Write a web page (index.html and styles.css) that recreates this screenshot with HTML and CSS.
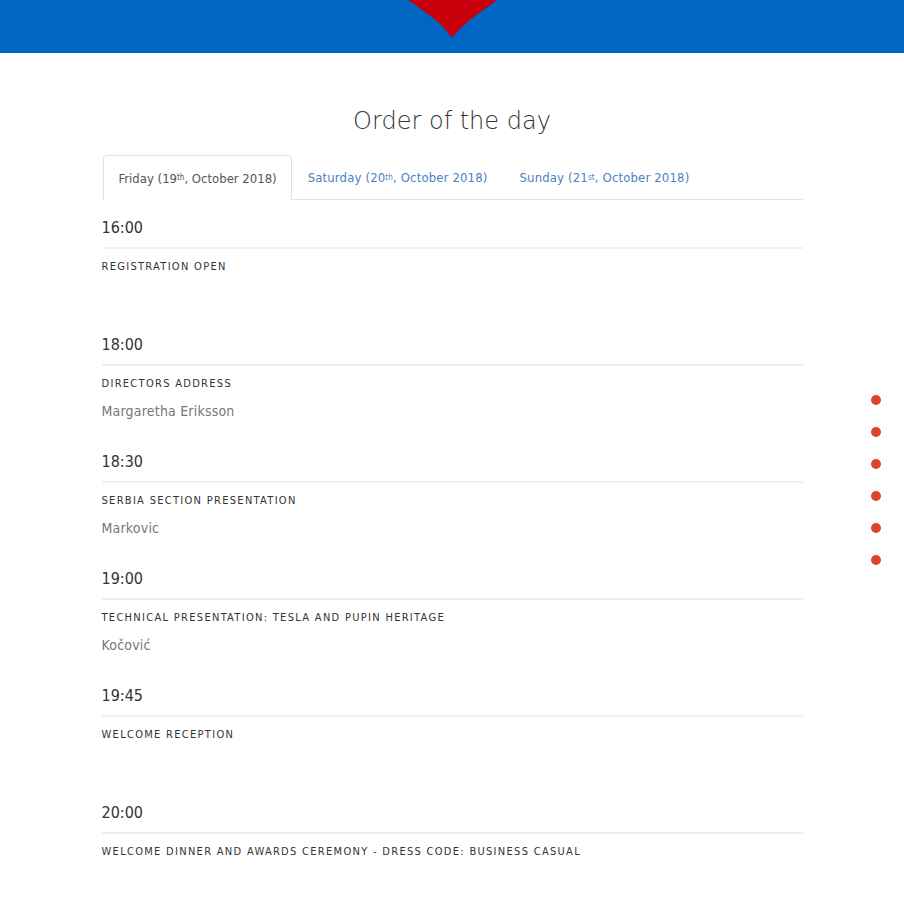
FILE: index.html
```html
<!DOCTYPE html>
<html lang="en">
<head>
<meta charset="utf-8">
<title>Order of the day</title>
<link rel="stylesheet" href="styles.css">
</head>
<body>
<header class="topbar">
  <svg class="logo" width="90" height="40" viewBox="0 0 90 40"><path d="M0 0 C14 10 34 22 44 38 C56 22 76 10 89 0 Z" fill="#c8000b"/></svg>
</header>
<main class="container">
  <h1 class="title">Order of the day</h1>
  <nav class="tabs">
    <a class="tab active">Friday (19<sup>th</sup>, October 2018)</a>
    <a class="tab">Saturday (20<sup>th</sup>, October 2018)</a>
    <a class="tab">Sunday (21<sup>st</sup>, October 2018)</a>
  </nav>
  <section class="schedule">
    <div class="item"><div class="time">16:00</div><div class="what">Registration open</div><div class="who">&nbsp;</div></div>
    <div class="item"><div class="time">18:00</div><div class="what">Directors address</div><div class="who">Margaretha Eriksson</div></div>
    <div class="item"><div class="time">18:30</div><div class="what">Serbia section presentation</div><div class="who">Markovic</div></div>
    <div class="item"><div class="time">19:00</div><div class="what">Technical presentation: Tesla and Pupin heritage</div><div class="who">Kočović</div></div>
    <div class="item"><div class="time">19:45</div><div class="what">Welcome reception</div><div class="who">&nbsp;</div></div>
    <div class="item"><div class="time">20:00</div><div class="what">Welcome dinner and awards ceremony - dress code: business casual</div><div class="who">&nbsp;</div></div>
  </section>
</main>
<ul class="dots">
  <li></li><li></li><li></li><li></li><li></li><li></li>
</ul>
</body>
</html>
```

FILE: styles.css
```css
html, body {
  margin: 0;
  padding: 0;
  background: #fff;
}
body {
  font-family: "DejaVu Sans Condensed", "DejaVu Sans", sans-serif;
  color: #333;
}
.topbar {
  height: 53px;
  background: #0066c4;
  display: flex;
  justify-content: center;
}
.logo {
  display: block;
  margin-left: 2px;
}
.container {
  width: 701px;
  margin: 0 auto;
}
.title {
  margin: 48px 0 0;
  text-align: center;
  font-family: "DejaVu Sans", sans-serif;
  font-weight: 200;
  font-size: 24px;
  line-height: 40px;
  color: #333;
  letter-spacing: 0;
}
.tabs {
  margin-top: 14px;
  display: flex;
  border-bottom: 1px solid #e3e3e3;
  padding-left: 1px;
}
.tab {
  height: 43px;
  display: flex;
  align-items: center;
  padding: 0 15px;
  font-size: 13px;
  color: #4d82c3;
  border: 1px solid transparent;
  border-bottom: none;
  border-radius: 4px 4px 0 0;
  margin-bottom: -1px;
  letter-spacing: 0.15px;
}
.tab sup {
  font-size: 8px;
  line-height: 0;
  vertical-align: 5px;
}
.tab.active {
  color: #555;
  background: #fff;
  border-color: #e3e3e3;
  height: 44px;
  letter-spacing: 0;
  padding-right: 14px;
}
.schedule {
  padding-top: 16px;
}
.item {
  height: 117px;
}
.time {
  font-size: 16px;
  line-height: 24px;
  color: #333;
  padding-bottom: 7px;
  border-bottom: 2px solid #f0f0f0;
}
.what {
  margin-top: 8px;
  font-size: 11px;
  line-height: 20px;
  letter-spacing: 1.3px;
  text-transform: uppercase;
  color: #333;
}
.who {
  margin-top: 7px;
  font-size: 14px;
  line-height: 20px;
  letter-spacing: 0.2px;
  color: #777;
}
.dots {
  position: absolute;
  left: 871px;
  top: 395px;
  margin: 0;
  padding: 0;
  list-style: none;
  display: flex;
  flex-direction: column;
  gap: 22px;
}
.dots li {
  width: 10px;
  height: 10px;
  border-radius: 50%;
  background: #e0442b;
}
```
